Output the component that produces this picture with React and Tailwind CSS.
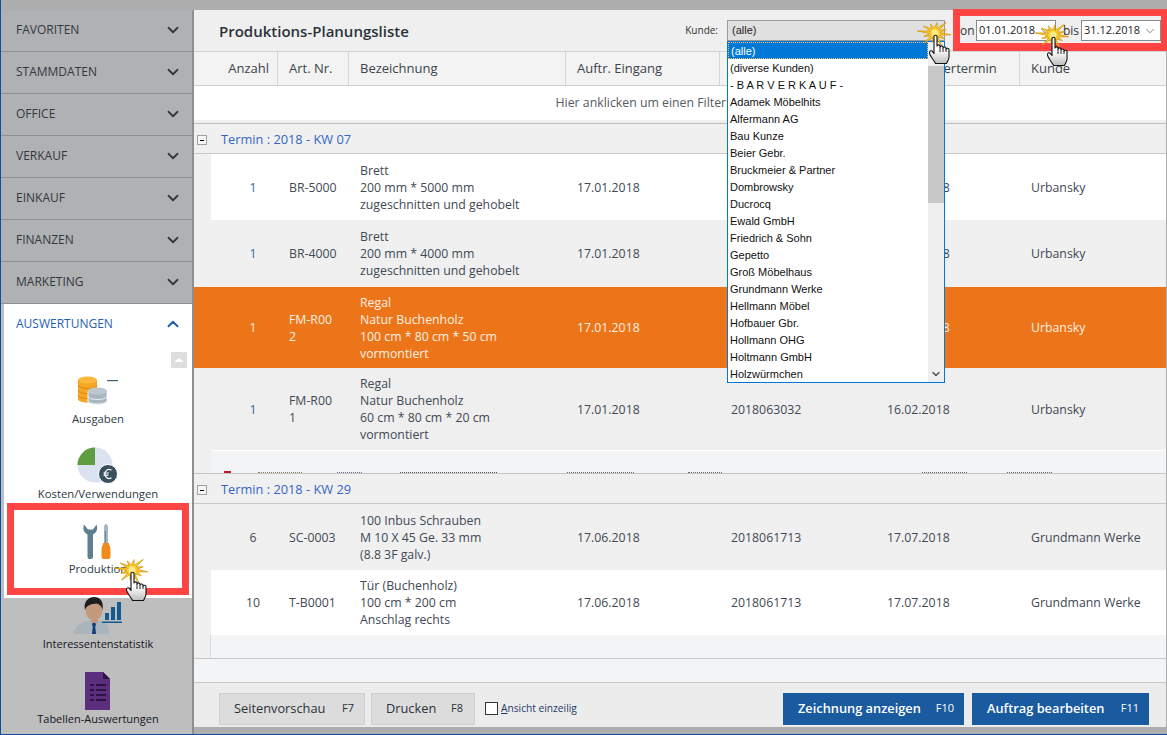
import React from "react";
import { ChevronDown, ChevronUp } from "lucide-react";

const menuTop = ["FAVORITEN", "STAMMDATEN", "OFFICE", "VERKAUF", "EINKAUF", "FINANZEN", "MARKETING"];

const kunden = [
  "(diverse Kunden)",
  "- B A R V E R K A U F -",
  "Adamek Möbelhits",
  "Alfermann AG",
  "Bau Kunze",
  "Beier Gebr.",
  "Bruckmeier & Partner",
  "Dombrowsky",
  "Ducrocq",
  "Ewald GmbH",
  "Friedrich & Sohn",
  "Gepetto",
  "Groß Möbelhaus",
  "Grundmann Werke",
  "Hellmann Möbel",
  "Hofbauer Gbr.",
  "Hollmann OHG",
  "Holtmann GmbH",
  "Holzwürmchen",
];

// click marker: spiky star drawn around (18,18)
const spikes = [16, 12, 18, 13, 17, 12, 18, 15, 13, 14, 18, 12];
const starPoints = spikes
  .map((r, i) => {
    const ang = (i * Math.PI) / 6 + 0.15;
    const outer = `${18 + r * Math.cos(ang)},${18 + r * 0.75 * Math.sin(ang)}`;
    const next = ang + Math.PI / 12;
    return `${outer} ${18 + 5 * Math.cos(next)},${18 + 5 * Math.sin(next)}`;
  })
  .join(" ");

const Burst = ({ className }) => (
  <div className={`absolute z-30 ${className}`}>
    <svg width="36" height="36" viewBox="0 0 36 36" className="absolute left-0 top-0">
      <polygon points={starPoints} fill="#f7cf2e" stroke="#d9970a" strokeWidth="0.800" strokeLinejoin="round" />
      <circle cx="18" cy="18" r="3.500" fill="#fde98a" />
    </svg>
    <svg width="24" height="32" viewBox="0 0 24 32" className="absolute left-[11px] top-[18px]">
      <defs>
        <linearGradient id="hand" x1="0" y1="0" x2="0" y2="1">
          <stop offset="0.5" stopColor="#ffffff" />
          <stop offset="1" stopColor="#bdbdbd" />
        </linearGradient>
      </defs>
      <path
        d="M6 3.500c0-1.600 3-1.600 3 0V13c0-1.500 3-1.500 3 0v1c0-1.500 3-1.500 3 0v1c0-1.500 3-1.400 3 .2v1c0-1.300 3-1.300 3 .3V24c0 3-1.500 4-2.500 6.500H7.500C6 27 1.500 23 1.500 19.500c0-2 2.500-2.200 3-.8L6 20.500Z"
        fill="url(#hand)"
        stroke="#111"
        strokeWidth="1.100"
        strokeLinejoin="round"
      />
      <path d="M12 14v5M15 15v4M18 16v3" stroke="#111" strokeWidth="0.900" />
    </svg>
  </div>
);

const CoinsIcon = () => (
  <svg width="42" height="30" viewBox="0 0 42 30">
    <path d="M1 4v19c0 2 4 3.500 9.500 3.500S20 25 20 23V4Z" fill="#f5a623" />
    <g fill="none" stroke="#e2861a" strokeWidth="1">
      <path d="M1 9c0 2 4 3.500 9.500 3.500S20 11 20 9" />
      <path d="M1 14c0 2 4 3.500 9.500 3.500S20 16 20 14" />
      <path d="M1 19c0 2 4 3.500 9.500 3.500S20 21 20 19" />
    </g>
    <ellipse cx="10.500" cy="4" rx="9.500" ry="3.500" fill="#fbb73c" />
    <path d="M11 15v10c0 2 4 3.500 9.500 3.500S30 27 30 25V15Z" fill="#a9b8c0" stroke="#fff" strokeWidth="0.800" />
    <g fill="none" stroke="#eef2f4" strokeWidth="1">
      <path d="M11 20c0 2 4 3.500 9.500 3.500S30 22 30 20" />
      <path d="M11 24.500c0 2 4 3.500 9.500 3.500S30 26.500 30 24.500" />
    </g>
    <ellipse cx="20.500" cy="15" rx="9.500" ry="3.500" fill="#bcc8ce" />
    <rect x="30" y="4" width="11" height="1.200" fill="#44606e" />
  </svg>
);

const PieIcon = () => (
  <svg width="42" height="38" viewBox="0 0 42 38">
    <circle cx="18" cy="18" r="17.500" fill="#dce3f0" />
    <path d="M18 .5V18H.5A17.500 17.500 0 0 1 18 .5Z" fill="#5f9e40" />
    <circle cx="31" cy="27" r="9.500" fill="#39515c" stroke="#fff" strokeWidth="1" />
    <path d="M34.500 23.200a4.400 4.400 0 1 0 0 7.600M26.500 26h5.500M26.500 28.200h5" fill="none" stroke="#fff" strokeWidth="1.200" />
  </svg>
);

const ToolsIcon = () => (
  <svg width="30" height="36" viewBox="0 0 30 36">
    <path
      d="M1 1.500c-1.500 4-.5 8 3.500 10V34a2 2 0 0 0 2 2h1.500a2 2 0 0 0 2-2V11.500c4-2 5-6 3.500-10L10 6.500H5Z"
      fill="#5d7f8e"
    />
    <path d="M23 0.500l2 2.500v17h-4V3Z" fill="#a3b8c2" />
    <rect x="21.800" y="8" width="1.300" height="12" fill="#6f8b98" />
    <path d="M20 20h6v1.500c1 2 1.500 3 1.500 6V34a2 2 0 0 1-2 2h-5a2 2 0 0 1-2-2v-6.500c0-3 .5-4 1.500-6Z" fill="#f08c1e" />
  </svg>
);

const PersonIcon = () => (
  <svg width="48" height="38" viewBox="0 0 48 38">
    <path d="M0 37c0-8 6-11 14-13h3l3 3 3-3h3c8 2 9 5 9 13Z" fill="#aab4ba" />
    <path d="M17 22h7l-1 4h-5Z" fill="#c98e76" />
    <ellipse cx="20" cy="13" rx="8.500" ry="10.500" fill="#c39a7e" />
    <path d="M11 13C9 4 15 0 20 0c6 0 10 4 8.500 13-1-4-3-6-6-6.500-4 .5-10 1-11.500 6.500Z" fill="#1d1d1d" />
    <path d="M18.500 26h3l.5 2-.8 1.500L22 37h-4l.8-7.500L18 28Z" fill="#0e3f7e" />
    <g fill="#135a91">
      <rect x="31" y="16" width="4" height="7" />
      <rect x="37" y="10" width="4" height="13" />
      <rect x="43" y="5" width="4" height="18" />
      <rect x="28" y="24.500" width="20" height="1.500" />
    </g>
  </svg>
);

const SheetIcon = () => (
  <svg width="26" height="38" viewBox="0 0 26 38">
    <path d="M0 0h18l7 7v31H0Z" fill="#5b2f7d" />
    <path d="M18 0l7 7h-7Z" fill="#2e1345" />
    <g stroke="#26123a" strokeWidth="1.800">
      <line x1="5" y1="13" x2="9" y2="13" />
      <line x1="11" y1="13" x2="21" y2="13" />
      <line x1="5" y1="18" x2="9" y2="18" />
      <line x1="11" y1="18" x2="21" y2="18" />
      <line x1="5" y1="23" x2="9" y2="23" />
      <line x1="11" y1="23" x2="21" y2="23" />
      <line x1="5" y1="28" x2="9" y2="28" />
      <line x1="11" y1="28" x2="21" y2="28" />
    </g>
  </svg>
);

const NavItem = ({ icon, label, dark }) => (
  <div className="h-[75px] pt-[3px] flex flex-col items-center">
    <div className="h-[40px] flex items-center justify-center">{icon}</div>
    <div className={`h-[16px] leading-[16px] whitespace-nowrap ${dark ? "text-[11px] text-[#15151f]" : "text-[11.300px] text-[#2e3a46]"}`}>{label}</div>
  </div>
);

const Group = ({ label }) => (
  <div className="h-[30px] shrink-0 flex items-center pt-[3px] bg-[#f0f0f0] border-b border-[#c8c8c8]">
    <div className="ml-[3px] w-[10px] h-[10px] border border-[#a0a0a0] bg-[#f6f6f6] flex items-center justify-center">
      <div className="w-[4px] h-px bg-black"></div>
    </div>
    <span className="ml-[14px] text-[12.800px] text-[#3565c4]">{label}</span>
  </div>
);

const Row = ({ n, art, lines, date, order, term, kunde, h, bg, light, blue }) => (
  <div className={`${h} shrink-0 flex text-[12.300px] leading-[17px] ${light ? "text-[#fdf0e4]" : "text-[#3f4954]"}`}>
    <div className={`w-[17px] ${light ? bg : "bg-[#f0f0f0]"}`}></div>
    <div className={`flex-1 flex items-center ${bg}`}>
      <div className={`w-[67px] pl-[17px] text-center ${blue ? "text-[#2b6aa6]" : ""}`}>{n}</div>
      <div className="w-[71px] pl-[11px]">{art.map((a) => <div key={a}>{a}</div>)}</div>
      <div className="w-[217px] pl-[11px]">{lines.map((l) => <div key={l}>{l}</div>)}</div>
      <div className="w-[154px] pl-[11px]">{date}</div>
      <div className="w-[156px] pl-[11px]">{order}</div>
      <div className="w-[144px] pl-[11px]">{term}</div>
      <div className="pl-[11px]">{kunde}</div>
    </div>
  </div>
);

const Head = ({ w, children }) => (
  <div className={`${w} h-full flex items-center pl-[11px] pt-[1px] border-r border-[#d6d6d6] font-medium whitespace-nowrap`}>{children}</div>
);

const DateBox = ({ value, w }) => (
  <div className={`${w} h-[21px] bg-white border border-[#8a8a8a] flex items-center justify-between pl-[2px] pr-[3px] text-[11px] text-[#222]`}>
    <span>{value}</span>
    <ChevronDown size={14} strokeWidth={1.200} className="text-[#555]" />
  </div>
);

export default function App() {
  return (
    <div className="relative w-[1167px] h-[735px] overflow-hidden bg-[#aeaeae] border-l border-b border-[#0b4ea2] pt-[10px] flex font-['Open_Sans',sans-serif]">
      {/* Sidebar */}
      <div className="w-[193px] shrink-0 bg-[#bebebe] border-r-2 border-[#8f8f8f] flex flex-col">
        {menuTop.map((m) => (
          <div key={m} className="h-[42px] shrink-0 bg-[#b0b1b3] border-b border-[#8f9092] flex items-center justify-between pl-[15px] pr-[10px] pb-[2px] text-[12px] font-medium text-[#33383d]">
            <span>{m}</span>
            <ChevronDown size={18} strokeWidth={2.400} className="text-[#33383d]" />
          </div>
        ))}

        <div className="h-[294px] shrink-0 ml-[3px] bg-white">
          <div className="h-[42px] flex items-center justify-between pl-[12px] pr-[10px] pb-[2px] text-[12px] font-medium text-[#1f5fb5]">
            <span>AUSWERTUNGEN</span>
            <ChevronUp size={18} strokeWidth={2.600} className="text-[#1f5fb5]" />
          </div>
          <div className="h-[22px] flex justify-end pr-[5px] pt-[6px]">
            <div className="w-[16px] h-[16px] bg-[#dedede] flex items-center justify-center">
              <div className="w-0 h-0 border-x-[5px] border-x-transparent border-b-[4px] border-b-white"></div>
            </div>
          </div>
          <NavItem icon={<CoinsIcon />} label="Ausgaben" />
          <NavItem icon={<PieIcon />} label="Kosten/Verwendungen" />
          <NavItem icon={<ToolsIcon />} label="Produktion" />
        </div>

        <div className="-mt-[5px] relative ml-[3px]">
          <NavItem icon={<PersonIcon />} label="Interessentenstatistik" dark />
          <NavItem icon={<SheetIcon />} label="Tabellen-Auswertungen" dark />
        </div>
      </div>

      {/* Main */}
      <div className="w-[972px] h-[717px] flex flex-col bg-[#f3f4f6]">
        <div className="h-[42px] shrink-0 bg-[#efefef] border-b border-[#d4d4d4] flex items-center pl-[25px] pr-[5px]">
          <h1 className="mt-[1px] text-[15px] font-semibold text-[#2b323a]">Produktions-Planungsliste</h1>
          <span className="ml-auto text-[10px] text-[#333]">Kunde:</span>
          <div className="ml-[9px] w-[218px] h-[21px] bg-[#e0e0e0] border border-[#9a9a9a] flex items-center pl-[4px] font-['Liberation_Sans',sans-serif] text-[11px] text-[#222]">(alle)</div>
          <span className="ml-[9px] w-[22px] text-[12px] text-[#333]">von</span>
          <DateBox value="01.01.2018" w="w-[80px]" />
          <span className="ml-[7px] w-[18px] text-[12px] text-[#333]">bis</span>
          <DateBox value="31.12.2018" w="w-[80px]" />
        </div>

        <div className="h-[34px] shrink-0 bg-[#f3f3f3] border-b border-[#d0d0d0] flex items-center text-[13px] text-[#3c434b]">
          <div className="w-[84px] h-full flex items-center justify-end pr-[8px] pt-[1px] border-r border-[#d6d6d6] font-medium">Anzahl</div>
          <Head w="w-[71px]">Art. Nr.</Head>
          <Head w="w-[217px]">Bezeichnung</Head>
          <Head w="w-[154px]">Auftr. Eingang</Head>
          <Head w="w-[156px]">Auftr. Nr.</Head>
          <Head w="w-[144px]">Gepl. Liefertermin</Head>
          <div className="pl-[11px] pt-[1px] font-medium">Kunde</div>
        </div>

        <div className="h-[34px] shrink-0 bg-white flex items-center justify-center text-[12.300px] text-[#555c63]">Hier anklicken um einen Filter zu definieren</div>
        <div className="h-[4px] shrink-0 bg-[#f0f0f0] border-b border-[#bdbdbd]"></div>

        <Group label="Termin : 2018 - KW 07" />
        <Row h="h-[66px]" bg="bg-white" n="1" art={["BR-5000"]} lines={["Brett", "200 mm * 5000 mm", "zugeschnitten und gehobelt"]} date="17.01.2018" order="2018063032" term="16.02.2018" kunde="Urbansky" blue />
        <Row h="h-[67px]" bg="bg-[#f0f0f0]" n="1" art={["BR-4000"]} lines={["Brett", "200 mm * 4000 mm", "zugeschnitten und gehobelt"]} date="17.01.2018" order="2018063032" term="16.02.2018" kunde="Urbansky" blue />
        <Row h="h-[81px]" bg="bg-[#ed7519]" n="1" art={["FM-R00", "2"]} lines={["Regal", "Natur Buchenholz", "100 cm * 80 cm * 50 cm", "vormontiert"]} date="17.01.2018" order="2018063032" term="16.02.2018" kunde="Urbansky" light />
        <Row h="h-[82px]" bg="bg-[#efefef]" n="1" art={["FM-R00", "1"]} lines={["Regal", "Natur Buchenholz", "60 cm * 80 cm * 20 cm", "vormontiert"]} date="17.01.2018" order="2018063032" term="16.02.2018" kunde="Urbansky" blue />

        {/* next row, cut off by the group header below: only the tops of its glyphs show */}
        <div className="h-[24px] shrink-0 flex border-b border-[#c4c4c4]">
          <div className="w-[17px] bg-[#f0f0f0]"></div>
          <div className="flex-1 bg-[#f3f4f6] border-t border-white flex items-end pl-[13px]">
            <div className="w-[7px] h-[2px] bg-[#c4122f]"></div>
            <div className="ml-[27px] w-[44px] border-t border-dotted border-[#8a7a55]"></div>
            <div className="ml-[35px] w-[25px] border-t border-dotted border-[#6a6a8a]"></div>
            <div className="ml-[38px] w-[97px] border-t border-dotted border-[#555]"></div>
            <div className="ml-[70px] w-[67px] border-t border-dotted border-[#666]"></div>
            <div className="ml-[54px] w-[34px] border-t border-dotted border-[#666]"></div>
            <div className="ml-[200px] w-[45px] border-t border-dotted border-[#666]"></div>
            <div className="ml-[40px] w-[45px] border-t border-dotted border-[#666]"></div>
          </div>
        </div>

        <Group label="Termin : 2018 - KW 29" />
        <Row h="h-[66px]" bg="bg-[#f0f0f0]" n="6" art={["SC-0003"]} lines={["100 Inbus Schrauben", "M 10 X 45 Ge. 33 mm", "(8.8 3F galv.)"]} date="17.06.2018" order="2018061713" term="17.07.2018" kunde="Grundmann Werke" />
        <Row h="h-[65px]" bg="bg-white" n="10" art={["T-B0001"]} lines={["Tür (Buchenholz)", "100 cm * 200 cm", "Anschlag rechts"]} date="17.06.2018" order="2018061713" term="17.07.2018" kunde="Grundmann Werke" />

        <div className="h-[24px] shrink-0 flex border-b border-[#c8c8c8]">
          <div className="w-[17px] bg-[#f0f0f0] border-r border-dotted border-[#c8c8c8]"></div>
          <div className="flex-1 bg-[#f3f4f6]"></div>
        </div>
        <div className="flex-1 bg-[#f3f4f6] border-b border-[#c8c8c8]"></div>

        <div className="h-[44px] shrink-0 bg-[#ececec] flex items-center pl-[25px] pr-[17px] pt-[7px] text-[12.800px]">
          <button className="w-[146px] h-[32px] bg-[#dcdcdc] border border-[#cfcfcf] flex items-center justify-between pl-[14px] pr-[10px] text-[#2b323a] font-medium">
            <span>Seitenvorschau</span><span className="text-[11px]">F7</span>
          </button>
          <button className="ml-[6px] w-[104px] h-[32px] bg-[#dcdcdc] border border-[#cfcfcf] flex items-center justify-between pl-[14px] pr-[11px] text-[#2b323a] font-medium">
            <span>Drucken</span><span className="text-[11px]">F8</span>
          </button>
          <div className="ml-[10px] w-[13px] h-[13px] bg-white border border-[#333]"></div>
          <span className="ml-[3px] text-[10.200px] text-[#1d3a66]"><u>A</u>nsicht einzeilig</span>
          <button className="ml-auto w-[181px] h-[32px] bg-[#1a5a9e] flex items-center justify-between pl-[15px] pr-[10px] text-white font-semibold">
            <span>Zeichnung anzeigen</span><span className="text-[11px] font-normal">F10</span>
          </button>
          <button className="ml-[8px] w-[177px] h-[32px] bg-[#1a5a9e] flex items-center justify-between pl-[15px] pr-[10px] text-white font-semibold">
            <span>Auftrag bearbeiten</span><span className="text-[11px] font-normal">F11</span>
          </button>
        </div>
      </div>

      {/* Open dropdown */}
      <div className="absolute left-[726px] top-[41px] z-20 w-[218px] h-[342px] bg-white border border-[#0078d7] flex font-['Liberation_Sans',sans-serif] text-[11px] leading-[16px] text-[#111]">
        <div className="w-[200px]">
          <div className="h-[17px] bg-[#0078d7] text-white pl-[2px] border border-dotted border-[#f2c070]">(alle)</div>
          {kunden.map((k) => (
            <div key={k} className="h-[17px] pt-[1px] pl-[2px] whitespace-nowrap overflow-hidden">{k}</div>
          ))}
        </div>
        <div className="w-[16px] bg-[#efefef] flex flex-col items-center">
          <div className="h-[24px] w-full"></div>
          <div className="h-[137px] w-full bg-[#c8c8c8]"></div>
          <ChevronDown size={12} strokeWidth={3} className="mt-auto mb-[2px] text-[#555]" />
        </div>
      </div>

      {/* Red highlights */}
      <div className="absolute left-[952px] top-[9px] z-10 w-[215px] h-[42px] border-x-[7px] border-t-[7px] border-b-[8px] border-[#ff4444] pointer-events-none"></div>
      <div className="absolute left-[6px] top-[503px] z-10 w-[182px] h-[92px] border-[7px] border-[#ff4444] pointer-events-none"></div>

      <Burst className="left-[916px] top-[15px] w-[36px] h-[48px]" />
      <Burst className="left-[1034px] top-[17px] w-[36px] h-[48px]" />
      <Burst className="left-[113px] top-[552px] w-[36px] h-[48px]" />
    </div>
  );
}
